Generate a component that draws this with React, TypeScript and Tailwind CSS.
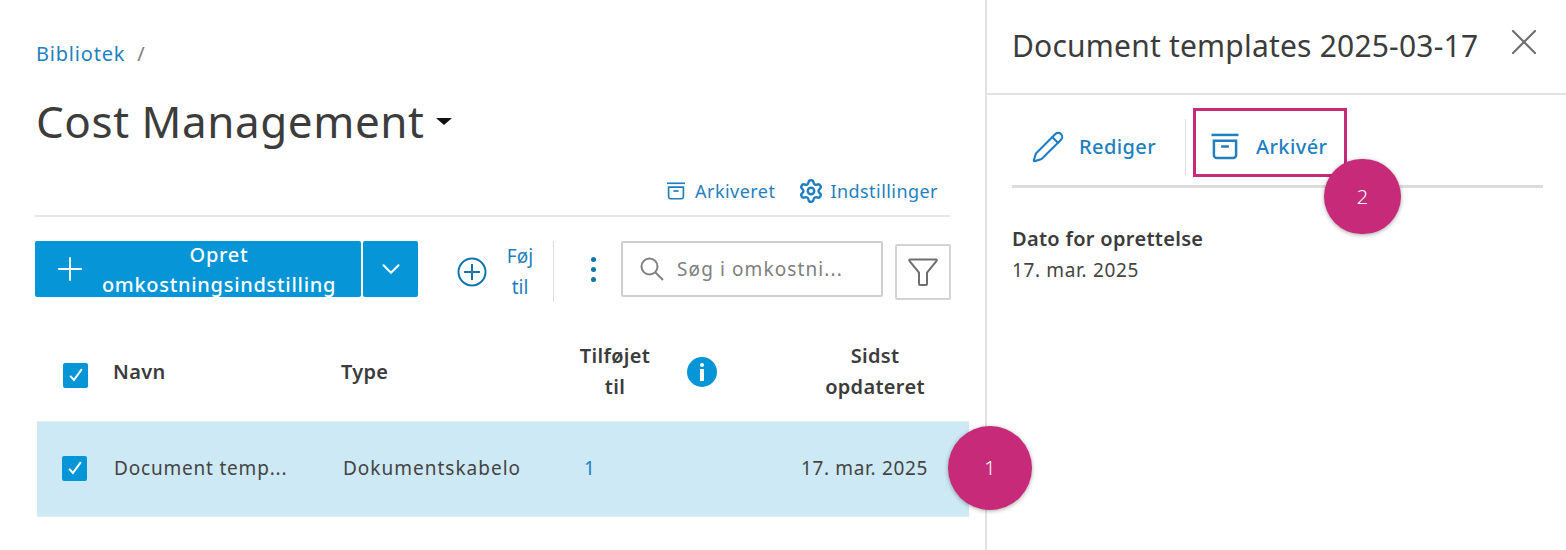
import { ChevronDown, Pencil, Plus, Settings, X } from "lucide-react";

const font = { fontFamily: "'Noto Sans', sans-serif" };

function ArchiveIcon({ className }: { className: string }) {
  return (
    <svg viewBox="0 0 30 28" fill="none" stroke="currentColor" strokeWidth="2.6" className={className}>
      <path d="M1 2h28" />
      <path d="M3.5 8h23v15a3 3 0 0 1-3 3h-17a3 3 0 0 1-3-3z" />
      <path d="M11 14h8" />
    </svg>
  );
}

function FilterIcon() {
  return (
    <svg viewBox="0 0 30 30" fill="none" stroke="#6f6f6f" strokeWidth="2" className="h-[30px] w-[30px]">
      <path d="M2 2.5h26a.8.8 0 0 1 .6 1.3L19 15.5V27a1 1 0 0 1-1 1h-6a1 1 0 0 1-1-1V15.5L1.4 3.8A.8.8 0 0 1 2 2.5z" />
    </svg>
  );
}

function SearchIcon() {
  return (
    <svg viewBox="0 0 24 24" fill="none" stroke="#808080" strokeWidth="2" className="h-[24px] w-[24px] shrink-0">
      <circle cx="9.5" cy="9.5" r="8" />
      <path d="M15.5 15.5L23 23" />
    </svg>
  );
}

function Check({ className }: { className: string }) {
  return (
    <div className={`flex items-center justify-center rounded-[2px] bg-[#0696d7] ${className}`}>
      <svg viewBox="0 0 24 24" fill="none" stroke="white" strokeWidth="2.4" className="h-[20px] w-[20px]">
        <path d="M5 13l4.5 5L19 5" />
      </svg>
    </div>
  );
}

function Badge({ n, className }: { n: string; className: string }) {
  return (
    <div className={`absolute flex items-center justify-center rounded-full bg-[#c62a78] text-[20px] font-light text-white shadow-[0_1px_4px_rgba(0,0,0,0.35)] ${className}`}>
      {n}
    </div>
  );
}

export default function App() {
  return (
    <div style={font} className="relative flex h-[550px] w-[1566px] overflow-hidden bg-white text-[#3c3c3c]">
      {/* Main column */}
      <div className="w-[987px] shrink-0 border-r-2 border-[#e2e2e2] pl-[35px]">
        <div className="mt-[44px] flex h-[20px] items-center gap-[12px] pl-[1px] text-[20px] tracking-[0.8px]">
          <span className="text-[#1f7fbf]">Bibliotek</span>
          <span className="text-[#808080]">/</span>
        </div>

        <div className="mt-[28px] flex h-[58px] items-center">
          <h1 className="pl-[1px] text-[44px] leading-none tracking-[0.55px] text-[#3c3c3c]">Cost Management</h1>
          <div className="ml-[12px] mt-[1px] h-0 w-0 border-x-[8px] border-t-[7px] border-x-transparent border-t-[#111]" />
        </div>

        {/* Links */}
        <div className="mt-[29px] flex h-[24px] w-[915px] items-center justify-end gap-[23px] pr-[12px] text-[18px] tracking-[0.45px] text-[#1f7fbf]">
          <span className="flex items-center gap-[9px]">
            <ArchiveIcon className="h-[18px] w-[20px]" />
            Arkiveret
          </span>
          <span className="flex items-center gap-[6px]">
            <Settings className="h-[26px] w-[26px]" strokeWidth={2.2} />
            Indstillinger
          </span>
        </div>
        <div className="mt-[12px] h-[2px] w-[915px] bg-[#e6e6e6]" />

        {/* Toolbar */}
        <div className="mt-[24px] flex h-[62px] w-[916px] items-start">
          <div className="flex h-[56px] w-[326px] items-center rounded-[2px] bg-[#0696d7] text-white">
            <Plus className="ml-[16px] h-[38px] w-[38px] shrink-0" strokeWidth={1.2} />
            <span className="ml-[5px] mt-[2px] w-[250px] text-center text-[20px] font-medium leading-[30px] tracking-[0.7px]">
              Opret omkostningsindstilling
            </span>
          </div>
          <div className="ml-[2px] flex h-[56px] w-[55px] items-center justify-center rounded-[2px] bg-[#0696d7] text-white">
            <ChevronDown className="h-[30px] w-[30px]" strokeWidth={1.6} />
          </div>
          <div className="ml-[39px] flex h-[62px] items-center text-[#1f7fbf]">
            <svg viewBox="0 0 30 30" fill="none" stroke="#0f75ad" strokeWidth="2" className="h-[30px] w-[30px]">
              <circle cx="15" cy="15" r="13.5" />
              <path d="M15 7v16M7 15h16" />
            </svg>
            <span className="ml-[17px] w-[32px] text-center text-[19px] leading-[31px]">Føj til</span>
          </div>
          <div className="ml-[17px] h-[61px] w-[1px] bg-[#dcdcdc]" />
          <div className="ml-[36px] flex h-[56px] w-[6px] flex-col items-center justify-center gap-[5px]">
            <div className="h-[5px] w-[5px] rounded-full bg-[#0f75ad]" />
            <div className="h-[5px] w-[5px] rounded-full bg-[#0f75ad]" />
            <div className="h-[5px] w-[5px] rounded-full bg-[#0f75ad]" />
          </div>
          <div className="ml-[25px] flex h-[56px] w-[262px] shrink-0 items-center rounded-[2px] border-2 border-[#cfcfcf] pl-[17px]">
            <SearchIcon />
            <span className="ml-[13px] whitespace-nowrap text-[19px] tracking-[1.1px] text-[#808080]">Søg i omkostni...</span>
          </div>
          <div className="ml-[12px] mt-[3px] flex h-[56px] w-[56px] shrink-0 items-center justify-center rounded-[2px] border-2 border-[#d4d4d4]">
            <FilterIcon />
          </div>
        </div>

        {/* Table header */}
        <div className="mt-[27px] flex h-[91px] w-[934px] items-center pl-[3px] text-[20px] font-semibold leading-[31px] tracking-[0.3px] text-[#3c3c3c]">
          <Check className="ml-[25px] -mt-[1px] h-[25px] w-[25px]" />
          <span className="ml-[25px] -mt-[9px] w-[228px]">Navn</span>
          <span className="-mt-[9px] w-[236px]">Type</span>
          <span className="-mt-[10px] w-[76px] text-center">Tilføjet til</span>
          <div className="ml-[34px] -mt-[8px] flex h-[30px] w-[30px] items-center justify-center rounded-full bg-[#0696d7]">
            <div className="flex flex-col items-center gap-[2px]">
              <div className="h-[4px] w-[4px] rounded-full bg-white" />
              <div className="h-[12px] w-[3.5px] bg-white" />
            </div>
          </div>
          <span className="-mt-[10px] ml-[100px] w-[116px] text-center">Sidst opdateret</span>
        </div>

        {/* Selected row */}
        <div className="ml-[2px] flex h-[96px] w-[932px] items-center border-y border-[#e4edf2] bg-[#cde9f6] pb-[2px] text-[19px] text-[#444]">
          <Check className="ml-[25px] h-[25px] w-[25px]" />
          <span className="ml-[27px] w-[229px] whitespace-nowrap tracking-[0.8px]">Document temp...</span>
          <span className="w-[179px] overflow-hidden whitespace-nowrap tracking-[1px]">Dokumentskabelon</span>
          <span className="ml-[62px] w-[30px] text-[#1f7fbf]">1</span>
          <span className="ml-[187px] whitespace-nowrap tracking-[0.65px]">17. mar. 2025</span>
        </div>
      </div>

      {/* Details panel */}
      <div className="flex-1">
        <div className="flex h-[95px] border-b-2 border-[#e2e2e2] pl-[25px]">
          <h2 className="mt-[26px] whitespace-nowrap text-[30px] leading-[40px] tracking-[0.2px] text-[#3c3c3c]">Document templates 2025-03-17</h2>
          <X className="ml-[24px] mt-[20px] h-[44px] w-[44px] shrink-0 text-[#707070]" strokeWidth={1.2} />
        </div>

        <div className="ml-[25px] mr-[23px] flex h-[93px] items-center border-b-[3px] border-[#dcdcdc] pt-[13px] text-[20px] font-medium tracking-[0.4px] text-[#1f7fbf]">
          <div className="flex w-[173px] items-center pl-[19px]">
            <Pencil className="h-[34px] w-[34px]" strokeWidth={1.5} />
            <span className="ml-[14px]">Rediger</span>
          </div>
          <div className="h-[56px] w-[1px] bg-[#dcdcdc]" />
          <div className="flex items-center pl-[24px]">
            <ArchiveIcon className="h-[27px] w-[30px]" />
            <span className="ml-[16px]">Arkivér</span>
          </div>
        </div>

        <div className="ml-[25px] mt-[37px] text-[20px] font-semibold leading-[28px] tracking-[0.3px] text-[#3c3c3c]">Dato for oprettelse</div>
        <div className="ml-[25px] mt-[3px] text-[19px] leading-[28px] tracking-[0.65px] text-[#444]">17. mar. 2025</div>
      </div>

      {/* Annotations */}
      <div className="absolute left-[1193px] top-[108px] h-[69px] w-[154px] border-[3px] border-[#c62a78]" />
      <Badge n="1" className="left-[948px] top-[426px] h-[84px] w-[84px]" />
      <Badge n="2" className="left-[1324px] top-[159px] h-[75px] w-[77px]" />
    </div>
  );
}
